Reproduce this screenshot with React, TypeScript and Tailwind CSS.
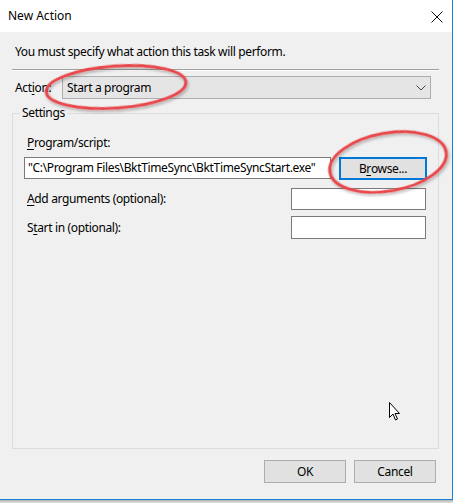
import React from "react";

const font = { fontFamily: '"Noto Sans", "Liberation Sans", sans-serif' };

function U({ children }: { children: React.ReactNode }) {
  return <span className="underline underline-offset-[2px] decoration-[1px]">{children}</span>;
}

export default function App() {
  return (
    <div className="relative w-[453px] h-[503px] bg-[#d9d9d9] text-[12px] tracking-[-0.35px] text-black" style={font}>
      <div className="w-[453px] h-[500px] flex flex-col bg-[#f0f0f0] border-r border-b border-[#1a80d6]">
        {/* title bar */}
        <div className="h-[32px] bg-white flex items-center justify-between pl-[8px] pr-[9px]">
          <span className="text-[12px] leading-[16px] tracking-normal">New Action</span>
          <svg width="12" height="12" viewBox="0 0 12 12" className="mt-[1px]">
            <path d="M0.5 0.5 L11.5 11.5 M11.5 0.5 L0.5 11.5" stroke="#111" strokeWidth="1" fill="none" />
          </svg>
        </div>
        {/* body */}
        <div className="flex flex-col pl-[12px] pr-[13px]">
          <div className="mt-[12px] pl-[3px] h-[16px] leading-[16px]">You must specify what action this task will perform.</div>
          <div className="mt-[9px] h-[1px] bg-[#a0a0a0]" />
          <div className="h-[1px] bg-white" />
          <div className="mt-[5px] flex items-center h-[23px]">
            <div className="w-[50px] pl-[3px] leading-[16px]">
              Act<U>i</U>on:
            </div>
            <div className="flex-1 mr-[8px] h-[23px] bg-[#e5e5e5] border border-[#adadad] flex items-center justify-between pl-[4px] pr-[4px]">
              <span className="leading-[16px]">Start a program</span>
              <svg width="10" height="6" viewBox="0 0 10 6">
                <path d="M0.5 0.5 L5 5 L9.5 0.5" stroke="#444" strokeWidth="1" fill="none" />
              </svg>
            </div>
          </div>
          {/* group box */}
          <div className="relative mt-[14px] h-[336px] border border-[#dcdcdc] flex flex-col">
            <span className="absolute -top-[9px] left-[7px] px-[2px] bg-[#f0f0f0] leading-[16px]">Settings</span>
            <div className="mt-[21px] pl-[14px] leading-[16px]">
              <U>P</U>rogram/script:
            </div>
            <div className="mt-[6px] flex items-start">
              <div className="ml-[11px] w-[307px] h-[22px] bg-white border border-[#7a7a7a] flex items-center pl-[3px] leading-[16px] whitespace-nowrap overflow-hidden">
                "C:\Program Files\BktTimeSync\BktTimeSyncStart.exe"
              </div>
              <div className="ml-[8px] w-[88px] h-[23px] bg-[#e1e1e1] border-2 border-[#0078d7] flex items-center justify-center leading-[16px]">
                B<U>r</U>owse...
              </div>
            </div>
            <div className="mt-[8px] flex items-center justify-between pr-[12px]">
              <span className="pl-[14px] leading-[16px]">
                <U>A</U>dd arguments (optional):
              </span>
              <div className="w-[135px] h-[22px] bg-white border border-[#7a7a7a]" />
            </div>
            <div className="mt-[6px] flex items-center justify-between pr-[12px]">
              <span className="pl-[14px] leading-[16px]">
                S<U>t</U>art in (optional):
              </span>
              <div className="w-[135px] h-[23px] bg-white border border-[#7a7a7a]" />
            </div>
          </div>
          {/* footer */}
          <div className="mt-[11px] flex justify-end gap-[8px] mr-[3px]">
            <div className="w-[82px] h-[23px] bg-[#e1e1e1] border border-[#adadad] flex items-center justify-center leading-[16px]">OK</div>
            <div className="w-[82px] h-[23px] bg-[#e1e1e1] border border-[#adadad] flex items-center justify-center leading-[16px]">Cancel</div>
          </div>
        </div>
      </div>
      <div className="h-[1px] bg-[#b8b8b8]" />
      <div className="h-[1px] bg-[#cccccc]" />

      {/* annotation ellipses */}
      <svg className="absolute left-0 top-0 pointer-events-none" width="453" height="503" viewBox="0 0 453 503">
        <defs>
          <filter id="sh" x="-20%" y="-20%" width="140%" height="160%">
            <feDropShadow dx="1" dy="2" stdDeviation="1.5" floodColor="#000" floodOpacity="0.3" />
          </filter>
        </defs>
        <ellipse cx="116" cy="87" rx="70" ry="21" transform="rotate(-4 116 87)" fill="none" stroke="#e8474c" strokeWidth="3" filter="url(#sh)" />
        <ellipse cx="388" cy="162" rx="59" ry="29" transform="rotate(-10 388 162)" fill="none" stroke="#e8474c" strokeWidth="3" filter="url(#sh)" />
      </svg>

      {/* mouse cursor */}
      <svg className="absolute left-[389px] top-[402px]" width="13" height="20" viewBox="0 0 13 20">
        <path d="M0.5 0.5 L0.5 15.5 L4 12 L6.5 18 L8.5 17 L6 11.5 L10.5 11.5 Z" fill="#fff" stroke="#000" strokeWidth="1" strokeLinejoin="miter" />
      </svg>
    </div>
  );
}
